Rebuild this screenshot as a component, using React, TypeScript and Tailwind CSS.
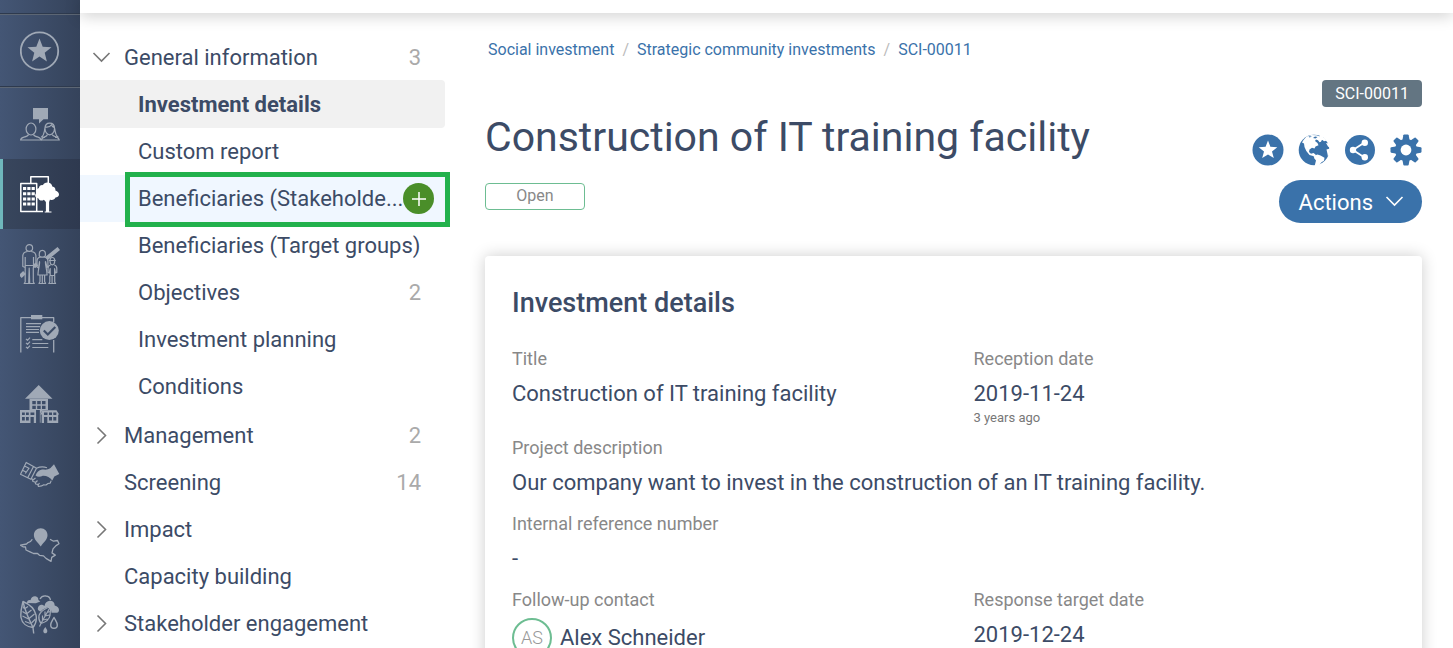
import type { ReactNode } from "react";

/* ---------- sidebar icons ---------- */

function Glyph({ children }: { children: ReactNode }) {
  return (
    <svg viewBox="0 0 40 40" className="size-10" fill="none" stroke="currentColor" strokeWidth="1.2" strokeLinejoin="round" aria-hidden="true">
      {children}
    </svg>
  );
}

const StarIcon = () => (
  <Glyph>
    <circle cx="19.5" cy="20" r="18.7" strokeWidth="1.8" />
    <path stroke="none" fill="currentColor" d="M19.5 7.5l3.2 8.2 8.8.5-6.8 5.6 2.2 8.6-7.4-4.8-7.4 4.8 2.2-8.6-6.8-5.6 8.8-.5z" />
  </Glyph>
);

const PeopleIcon = () => (
  <Glyph>
    <path stroke="none" fill="currentColor" d="M13 4h15v11.3h-4.500L19 19.500v-4.200h-6z" />
    <ellipse cx="11" cy="25" rx="4.900" ry="6" />
    <path d="M8.500 30.500c-.5 1.500-2 2-4.500 2.600C1.500 33.800.800 34.500.600 36h20.500c-.3-1.500-1-2.300-3-2.900-2.500-.6-4.100-1.100-4.600-2.600" />
    <path d="M25 24c-1 4-.5 7-3.500 9l3.500.5M25 24.500c0-3.500 2-5.300 4.700-5.300s4.800 1.800 4.800 5.300c0 3.500-2.200 6.300-4.800 6.300S25 28 25 24.500zM25.500 23c3 .5 5-.7 6-2.300.3 1.800 1.500 2.500 3 3M34.500 24c1 4 .5 7 3.500 9l-3 .3" />
    <path d="M27.500 30.500c-.5 1.500-1.500 2-3.300 2.600-1.700.7-2.500 1.400-2.900 2.900h18c-.3-1.500-1.200-2.300-3-2.900-2-.6-3.800-1.100-4.300-2.600" />
  </Glyph>
);

const windowRows = [13, 18.2, 23.4, 28.6];

const BuildingTreeIcon = () => (
  <Glyph>
    <path strokeWidth="1.500" d="M10.800 9V2.700h17.500V9" />
    <path strokeWidth="1.500" d="M23 37.500H.8V9.600h15.900v28" />
    {windowRows.map((y) => (
      <path key={y} stroke="none" fill="currentColor" d={`M3 ${y}h3.200v3H3zM7.300 ${y}h3.200v3H7.300zM11.600 ${y}h3.200v3h-3.200z`} />
    ))}
    <path stroke="none" fill="currentColor" d="M28 8.500c2.500.3 4 2 4.300 4 2.300.3 3.400 2 3.100 4 2.300.8 3.800 2.300 3.600 4.300-.2 1.900-2 2.700-3.500 2.700-.8 2.300-3.800 3-5.500 1.900l-.9 2.500V37.500h2.400v1h-6.800v-1h1.200V28l-2-2.300c-1.800 1.500-4.900 1-5.600-1.500-2.300-.2-3.500-1.700-3-3.500.3-1 .9-1.500 1.600-1.900-1.200-2-.3-4.200 2-4.700.2-2.300 2.200-3.300 4-2.900.8-1.900 2.900-3 5.100-2.700z" />
  </Glyph>
);

const FamilyIcon = () => (
  <Glyph>
    <path strokeWidth="4" d="M.3 32.500L4.500 28.500M14 22.500l3-2.500M26.500 14.500l12.300-10" />
    <circle cx="9.300" cy="4" r="3.300" />
    <path d="M7.500 7.500c-3 .4-4.700 1.800-4.700 4.500v10.500l2.400 1V13M11.200 7.500c3 .4 4.700 1.800 4.700 4.500v10.500l-2.400 1V13M5.200 23.500V38l-1 1.500h4.500L9.200 24l.5 15.500h4.600l-1-1.500V23.500M5.200 21.500h8.300" />
    <path d="M19.300 12c-.3-4 .7-5.700 3-5.700s3.500 1.700 3 5.700c-1.300 1.500-4.700 1.500-6 0zM20.500 13c-2.500.5-3.500 1.500-3.500 4v6l1.500 1 1-6.500c.5 3-1.200 6.500-1.600 13.500h9.200c-.4-7-2.100-10.500-1.600-13.500l1.500 6 .9-1v-5.500c0-2.500-1.500-3.500-3.900-4M20 31v6.500l-1 2h3.300V31v8.500h3.300l-1-2V31" />
    <path d="M28.800 16.500h7M30 16.500c0-2 .8-3 2.300-3s2.400 1 2.400 3c0 3-1 4.300-2.400 4.300S30 19.500 30 16.500zM30.500 21c-2 .5-2.500 1.500-2.500 3.500v4l1.300.5.9-4.500v7h4.400v-7l.9 4.500 1.300-.5v-4c0-2-.5-3-2.500-3.500M29.800 31.500V38l-1 1.500h3.300v-8v8h3.500l-.9-1.500v-6.500" />
  </Glyph>
);

const ChecklistIcon = () => (
  <Glyph>
    <path strokeWidth="1.300" d="M.8 38.500V3.700h32.900V8M33.700 26v12.500" />
    <path stroke="none" fill="currentColor" d="M11 1h11.300v4.300H11z" />
    <path d="M6 9.600h15M6 12.600h14M6 15.500h13M6 18.400h13M12.300 25.600h10M12.300 29.500h16M12.300 33.500h16M6 24.800l1.500 1.500 2.500-2.600M6 28.800l1.500 1.500 2.500-2.600M6 32.800l1.500 1.500 2.500-2.600" />
    <circle cx="29.300" cy="16.600" r="9.500" stroke="none" fill="currentColor" />
    <path stroke="#3c4c67" strokeWidth="2.200" strokeLinejoin="miter" d="M23.800 16.500l4 4 7.500-7.500" />
  </Glyph>
);

const VillageIcon = () => (
  <Glyph>
    <path stroke="none" fill="currentColor" fillRule="evenodd" d="M18.700 1l13.800 13.800H5zM9.500 14.500H28V26h-5l-2.500 3v9.800h-1.300V26h-3V39H0V26h9.500z" />
    <path stroke="none" fill="currentColor" d="M22.500 26.300h14l2.700 4.200h-1V39H21.700v-8.500h-1.500z" />
    <path stroke="none" fill="#3c4c67" d="M12.300 17h3.500v3.200h-3.500zM17.200 17h3.500v3.200h-3.500zM22 17h3.500v3.200H22zM12.300 21.700h3.500V25h-3.500zM17.200 21.700h3.500V25h-3.500zM22 21.700h3.500V25H22zM2 28.500h2.800V31H2zM6 28.500h2.800V31H6zM10.500 28.500h3.800V31h-3.800zM2 33h2.800v3.500H2zM6 33h2.800v3.500H6zM10.500 33h3.300v6h-3.300zM16.300 26h3.500v13h-3.500zM24 28.500h3.500V31H24zM29 28.500h3V31h-3zM33.300 28.500h3V31h-3zM24 33h3.300v6H24zM29 33h3v3.500h-3zM33.300 33h3v3.500h-3z" />
  </Glyph>
);

const HandshakeIcon = () => (
  <Glyph>
    <path d="M6.200 8.500L.5 20.300l7.200 3.500 5.800-11.300zM8.800 14.500l-3.500 5M3 16.500l3 1.500M4.500 12l5 2.500M13.500 12.500l3 1.800-5.600 11-3.200-1.600M16.500 14.300c4-2 7-1.800 10.500-.6M12 24.500l1 3 2 .5.7 2 2 .3.8 2.200 3-.6 1.800-1 2.700.1 2-1.500 2.200-.4 1-2.500" />
    <path d="M13 26l2.500-2M15.500 28.500l2-2M18 31l1.500-2" />
    <path stroke="none" fill="currentColor" d="M15.500 21.500c1.300-3.300 3.300-5.300 6.500-6 3 0 5.500.8 8.500-1.500l3.500-3.800L39.300 20l-5 2.500-2 4c-2.200-3.200-5.800-5-9.500-4.800-2.300 1.100-5 1.500-7.300-.2z" />
  </Glyph>
);

const MapPinIcon = () => (
  <Glyph>
    <path stroke="none" fill="currentColor" d="M20.700 4.200c4 0 6.800 3 6.800 7 0 4.500-4 7-6.800 11.300-2.800-4.300-6.800-6.800-6.800-11.300 0-4 2.800-7 6.800-7z" />
    <path strokeWidth="1.300" d="M12.300 15.300c-1 2-2.500 3-4.300 3.300L6.500 20l-6 1.200L3 22.800l2.500.2.500 3 4 1.800 3.500 1.700h4l2 1.800 4 .6 2.500 2.500 5 3 .7-4 3.600-2.300-3.300-2.200 1-4 3-3.300 3-1.800-1.500-3.300-4 .7-3.500-2" />
  </Glyph>
);

const NatureIcon = () => (
  <Glyph>
    <path stroke="none" fill="currentColor" d="M7 9c-.2-2.200 1.500-3.200 3.500-2.800C11 3.500 13.500 1.800 16 2.500c2 .5 2.500 2 2.300 3.500l2 1.500-4.500 1.800zM18 16c-.7-2.500.5-4.500 3-5.200 1.500 0 2.500.5 3.500 1.200.5-3 2.500-5.200 5.500-5.200s4.700 2 4.700 4.700c2.800.5 4.300 2.500 4.300 4.500 0 1.700-1 2.500-2 2.800h-5.500l-1-6c-4 .5-7.500 2.200-10 5z" />
    <path strokeWidth="1.300" d="M20 5c1.300-2.500 3.500-3.300 6-3 2.500.2 4 1.500 4.500 4" />
    <path strokeWidth="1.400" d="M3 7.500c6 2.500 11.500 7 13 13.500 1 5-.2 9-3 12.500C7 33 2 29.500 1 23.500.2 17.500 1.800 12.500 3 7.500zM3 7.500c2 10 6.500 19 10 26l.7 6" />
    <path d="M4.500 15L3 12.500M6.500 20l-4-2.500M8.500 25l-6-3M10.500 29.500L5 27.500M5 14.500l3-2M7 19.500l4.500-3.500M9 24.500l5.500-4.500M11.500 29l4-4" />
    <path d="M30.500 12.500c-5.500 2-10 5-11.500 9-.7 3.500.2 5.500 2 8 4.500-1.300 8.300-3.700 9-8 .4-3.500.7-6 .5-9zM30.500 12.500c-3 6-6.500 11-9.500 17l-1.500 3M25 22v-4.500M22.500 26v-4.500M25 22l4.500-1M23 26l4.500-1M27 18.500l3-1" />
    <path strokeWidth="1.400" d="M34 23.500c1.500 3 3.300 5 3.300 7.500 0 2-1.500 3.300-3.300 3.300s-3.300-1.300-3.300-3.300c0-2.500 1.800-4.500 3.300-7.500z" />
    <path stroke="none" fill="currentColor" d="M25.300 33c.8 1.500 2 2.500 2 4s-.9 2.300-2 2.300-2-.8-2-2.300 1.200-2.500 2-4z" />
  </Glyph>
);

const sidebarItems = [
  { label: "Social investment", icon: <BuildingTreeIcon />, active: true },
  { label: "Communities", icon: <FamilyIcon /> },
  { label: "Commitments", icon: <ChecklistIcon /> },
  { label: "Resettlement", icon: <VillageIcon /> },
  { label: "Agreements", icon: <HandshakeIcon /> },
  { label: "Land access", icon: <MapPinIcon /> },
  { label: "Environment", icon: <NatureIcon /> },
];

function Sidebar() {
  return (
    <aside className="w-20 shrink-0 bg-linear-to-r from-[#445675] to-[#35435b] text-[#a0a9b6]">
      <div className="h-[15px] border-b border-[#5c6674] shadow-[inset_0_-1px_0_#2e3a4e]" />
      <a href="#favorites" aria-label="Favorites" className="flex h-[73px] items-center justify-center border-b border-[#5c6674] shadow-[inset_0_-1px_0_#2e3a4e]">
        <StarIcon />
      </a>
      <a href="#stakeholders" aria-label="Stakeholders" className="flex h-[71px] items-center justify-center">
        <PeopleIcon />
      </a>
      {sidebarItems.map((item) => (
        <a
          key={item.label}
          href="#"
          aria-label={item.label}
          className={`flex h-[70px] items-center justify-center ${
            item.active ? "border-l-3 border-[#6fb7bb] bg-linear-to-r from-[#38465d] to-[#2e394f] pr-[3px] text-white" : ""
          }`}
        >
          {item.icon}
        </a>
      ))}
    </aside>
  );
}

/* ---------- record navigation ---------- */

function Chevron({ open = false }: { open?: boolean }) {
  return (
    <svg viewBox="0 0 20 20" className="size-5" fill="none" stroke="currentColor" strokeWidth="1.600" aria-hidden="true">
      <path d={open ? "M1.500 5l8 8 8-8" : "M5.500 1.500l8 8-8 8"} />
    </svg>
  );
}

type NavRow = { label: string; count?: number; expandable?: boolean };

const subItems: NavRow[] = [
  { label: "Beneficiaries (Target groups)" },
  { label: "Objectives", count: 2 },
  { label: "Investment planning" },
  { label: "Conditions" },
];

const sections: NavRow[] = [
  { label: "Management", count: 2, expandable: true },
  { label: "Screening", count: 14 },
  { label: "Impact", expandable: true },
  { label: "Capacity building" },
  { label: "Stakeholder engagement", expandable: true },
];

function SectionRow({ label, count, expandable, open }: NavRow & { open?: boolean }) {
  return (
    <a href="#" className="flex h-[47px] items-center pt-[2px] pr-6 pl-3">
      <span className="w-8 text-[#777]">{(expandable || open) && <Chevron open={open} />}</span>
      <span className="flex-1">{label}</span>
      <span className="text-[#aaa]">{count}</span>
    </a>
  );
}

function RecordNav() {
  return (
    <nav className="w-[365px] shrink-0 pt-5 text-[22px] leading-8 whitespace-nowrap">
      <SectionRow label="General information" count={3} open />
      <div className="pb-px">
        <a href="#" className="flex h-12 items-center rounded-r-[4px] bg-[#f1f1f1] pt-[2px] pl-[58px] font-bold">
          Investment details
        </a>
        <a href="#" className="flex h-[47px] items-center pl-[58px]">
          Custom report
        </a>
        <div className="relative flex h-[47px] items-center justify-between bg-[#f0f7ff] pr-[14px] pl-[58px]">
          <a href="#">Beneficiaries (Stakeholde...</a>
          <button aria-label="Add beneficiary" className="flex size-[31px] shrink-0 items-center justify-center rounded-full bg-[#4a8e29] text-white">
            <svg viewBox="0 0 16 16" className="size-4" stroke="currentColor" strokeWidth="1.500" aria-hidden="true">
              <path d="M8 1v14M1 8h14" />
            </svg>
          </button>
          <span className="pointer-events-none absolute -top-[3px] -right-[5px] -bottom-[5px] left-[45px] border-5 border-[#22b14c]" />
        </div>
        {subItems.map((item) => (
          <a key={item.label} href="#" className="flex h-[47px] items-center justify-between pt-px pr-6 pl-[58px]">
            {item.label}
            <span className="text-[#aaa]">{item.count}</span>
          </a>
        ))}
      </div>
      {sections.map((item) => (
        <SectionRow key={item.label} {...item} />
      ))}
    </nav>
  );
}

/* ---------- record header ---------- */

const GearIcon = () => (
  <svg viewBox="0 0 32 32" className="size-8" fill="currentColor" aria-hidden="true">
    {[0, 45, 90, 135].map((a) => (
      <path key={a} transform={`rotate(${a} 16 16)`} d="M13.300 1.200q.2-.7.9-.7h3.600q.7 0 .9.700l1 5.800v18l-1 5.800q-.2.700-.9.700h-3.600q-.7 0-.9-.7l-1-5.800V7z" />
    ))}
    <circle cx="16" cy="16" r="11" />
    <circle cx="16" cy="16" r="5.400" fill="#fff" />
  </svg>
);

const RoundStarIcon = () => (
  <svg viewBox="0 0 32 32" className="size-8" aria-hidden="true">
    <circle cx="16" cy="16" r="15.500" fill="currentColor" />
    <path fill="#fff" d="M16 6.500l2.400 6.300 6.900.4-5.300 4.200 1.800 6.700-5.800-3.700-5.800 3.700 1.800-6.700-5.300-4.200 6.900-.4z" />
  </svg>
);

const GlobeIcon = () => (
  <svg viewBox="0 0 32 32" className="size-8" aria-hidden="true">
    <circle cx="16" cy="16" r="15.300" fill="currentColor" />
    <path fill="#fff" d="M8.500 2.500L5.500 6 4 8.500l2 1 .5 3.500 1.800 4 3.200 4 3.500 1 3 2-.5-3.500-2-1.500-2.500.8-2-1.800.5-2.500 2.500-1.700 2.500.7 1-2 3-1.200-1-2.300-2.500-2 1-1.500 2 .8 1.500 2 1.500-.5 1-2.500-2.500-1.500 1-1-4-1.500-5-.3z" />
    <path fill="currentColor" d="M10.500 2.200l3.500.3-2.500 1zM15 4l2-1.500 2.500.5-2 1.500z" />
    <path fill="#fff" d="M16.500 21.500l3-1 3 1 4 2.300-.5 3-2.500 1.500-3 3.500-4 .7 1.500-6-2-2.500z" />
    <path fill="#fff" d="M22 .5l7 6-3 .7-1.500-1.200-2 .5-1.500-2.500zM28 9l3 .5.500 4-1.500-1zM28.500 15.500l3.500-1-.5 5-1.500 3.500-.5-3z" />
  </svg>
);

const ShareIcon = () => (
  <svg viewBox="0 0 32 32" className="size-8" aria-hidden="true">
    <circle cx="16" cy="16" r="15" fill="currentColor" />
    <path d="M20.500 8.500L9 16l11.500 7.500" fill="none" stroke="#fff" strokeWidth="1.800" />
    <circle cx="20.800" cy="8.700" r="3.200" fill="#fff" />
    <circle cx="9" cy="16" r="3.200" fill="#fff" />
    <circle cx="20.800" cy="23.300" r="3.200" fill="#fff" />
  </svg>
);

const toolbar = [
  { label: "Add to favorites", icon: <RoundStarIcon /> },
  { label: "Map", icon: <GlobeIcon /> },
  { label: "Share", icon: <ShareIcon /> },
  { label: "Settings", icon: <GearIcon /> },
];

function RecordHeader() {
  return (
    <header className="flex items-start justify-between">
      <div>
        <h1 className="pt-8 text-[41px] leading-[50px]">Construction of IT training facility</h1>
        <div className="mt-[21px] flex h-[27px] w-[100px] justify-center rounded-[4px] border border-[#6dbd92] text-base leading-6 text-[#888]">Open</div>
      </div>
      <div className="flex flex-col items-end">
        <span className="h-[27px] rounded-[4px] bg-[#637582] px-[13px] text-base leading-[27px] text-white">SCI-00011</span>
        <div className="mt-[27px] flex gap-[14px] text-[#3a72aa]">
          {toolbar.map((t) => (
            <button key={t.label} aria-label={t.label}>
              {t.icon}
            </button>
          ))}
        </div>
        <button className="mt-[14px] flex h-[43px] items-center gap-3 rounded-full bg-[#3a72aa] pt-px pr-[17px] pl-5 text-[22px] text-white">
          Actions
          <Chevron open />
        </button>
      </div>
    </header>
  );
}

/* ---------- details card ---------- */

function Field({ label, note, wide, children }: { label: string; note?: string; wide?: boolean; children: ReactNode }) {
  return (
    <div className={wide ? "col-span-2" : ""}>
      <dt className="text-[18px] leading-9 text-[#888]">{label}</dt>
      <dd className="text-[22px] leading-[34px]">{children}</dd>
      {note && <dd className="text-[13px] leading-[13px] text-[#777]">{note}</dd>}
    </div>
  );
}

function DetailsCard() {
  return (
    <section className="mt-[33px] min-h-[480px] rounded-[4px] bg-white p-[27px] shadow-[0_0_16px_rgba(0,0,0,0.2)]">
      <h2 className="mb-[18px] text-[27px] leading-10 font-medium">Investment details</h2>
      <dl className="grid grid-cols-2 gap-x-10 gap-y-[6px]">
        <Field label="Title">Construction of IT training facility</Field>
        <Field label="Reception date" note="3 years ago">
          2019-11-24
        </Field>
        <Field label="Project description" wide>
          Our company want to invest in the construction of an IT training facility.
        </Field>
        <Field label="Internal reference number" wide>
          -
        </Field>
        <Field label="Follow-up contact">
          <span className="flex h-10 items-center gap-2">
            <span className="flex size-10 items-center justify-center rounded-full border-2 border-[#6dbd92] text-[18px] font-light text-[#999]">AS</span>
            Alex Schneider
          </span>
        </Field>
        <Field label="Response target date">2019-12-24</Field>
      </dl>
    </section>
  );
}

export default function App() {
  return (
    <div className="flex h-screen overflow-hidden bg-white font-[Roboto,sans-serif] text-[#3c4b66]">
      <Sidebar />
      <div className="flex min-w-0 flex-1 flex-col">
        <div className="h-[13px] shrink-0 shadow-[0_2px_16px_rgba(0,0,0,0.22)]" />
        <div className="flex min-h-0 flex-1">
          <RecordNav />
          <main className="min-w-0 flex-1 pt-[25px] pr-[31px] pl-10">
            <nav aria-label="Breadcrumb" className="mb-[18px] flex gap-2 pl-[3px] text-base text-[#3a72aa]">
              <a href="#">Social investment</a>
              <span className="text-[#bbb]">/</span>
              <a href="#">Strategic community investments</a>
              <span className="text-[#bbb]">/</span>
              <a href="#">SCI-00011</a>
            </nav>
            <RecordHeader />
            <DetailsCard />
          </main>
        </div>
      </div>
    </div>
  );
}
